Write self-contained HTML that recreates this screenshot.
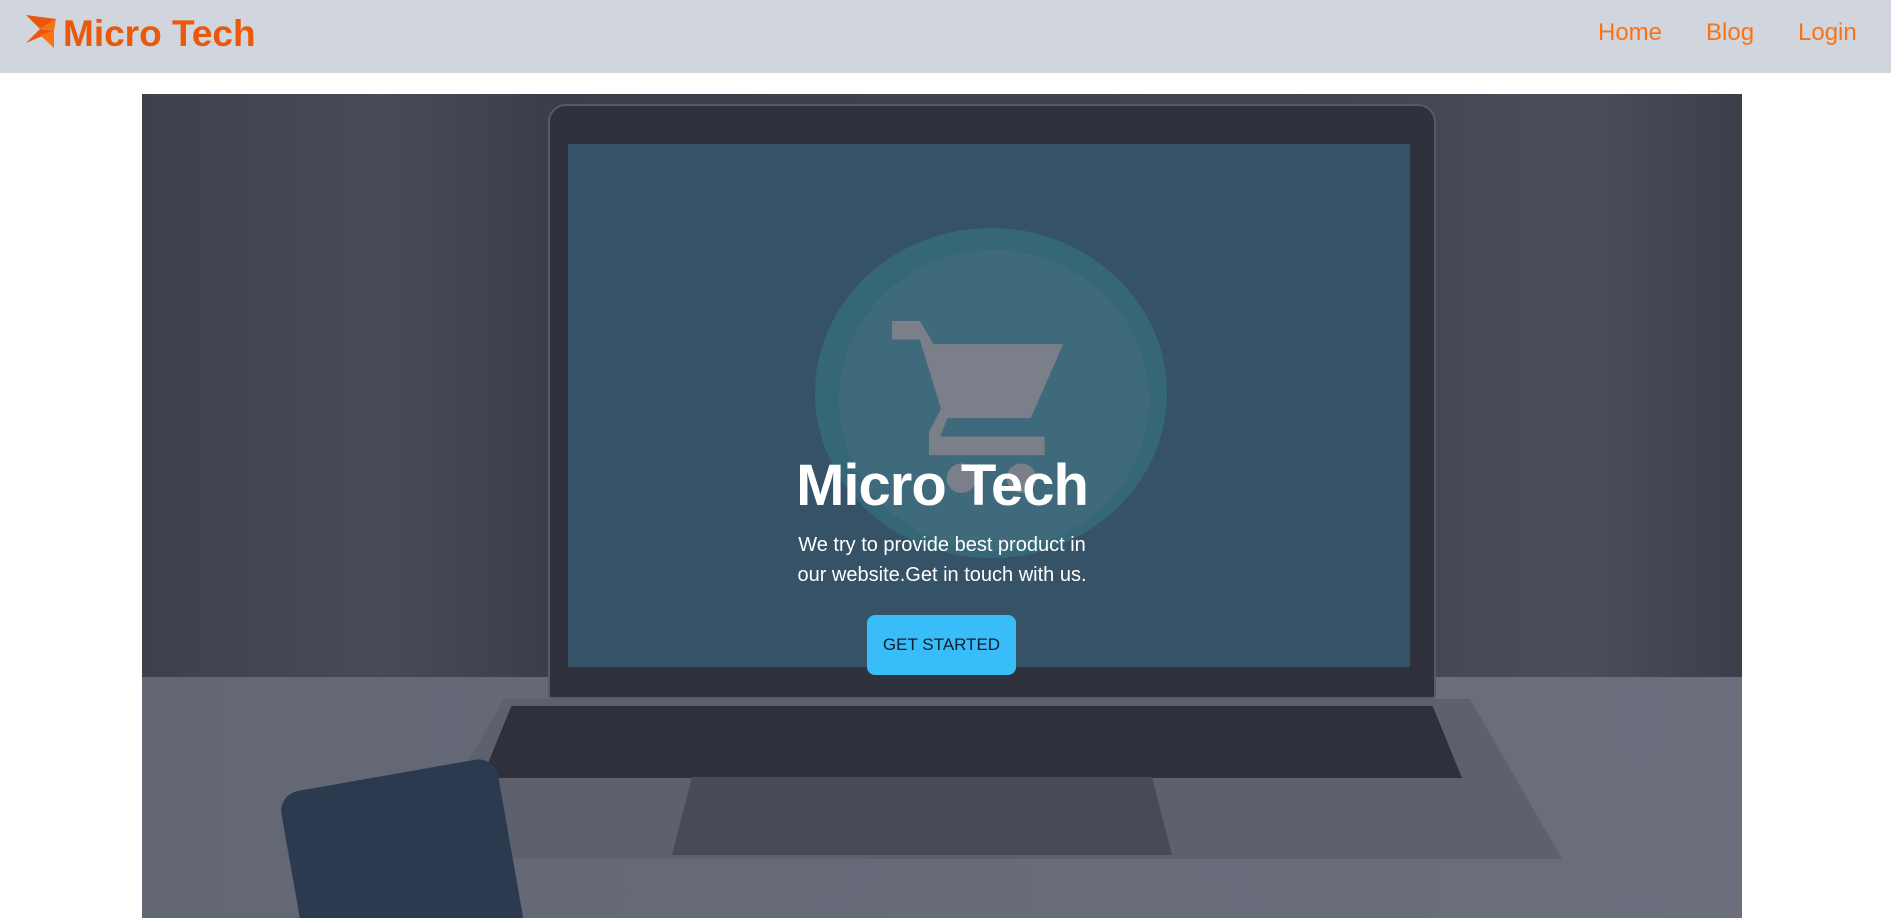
<!DOCTYPE html>
<html><head><meta charset="utf-8"><style>
*{margin:0;padding:0;box-sizing:border-box}
html,body{width:1891px;height:918px;overflow:hidden}
body{background:#fff;font-family:"Segoe UI","Liberation Sans",sans-serif;position:relative}
nav{position:absolute;left:0;top:0;width:1891px;height:73px;background:#d1d5de}
.logo{position:absolute;left:63px;top:13px;font-size:37px;font-weight:bold;color:#ea580c}
.links a{position:absolute;top:19px;font-size:24px;color:#f97316;text-decoration:none}
.hero{position:absolute;left:142px;top:94px;width:1600px;height:824px;overflow:hidden;background:linear-gradient(90deg,#3d414c 0%,#474b58 15%,#3b3f4b 25%,#41454f 75%,#4a4e5b 90%,#3b3f4a 100%)}
.a{position:absolute}
</style></head><body>
<nav>
<svg class="a" style="left:26px;top:15px" width="32" height="34" viewBox="0 0 32 34"><polygon points="0,0 30,4 14,14" fill="#ea580c"/><polygon points="30,4 28,16 14,14" fill="#f97316"/><polygon points="14,14 28,16 0,28" fill="#ea580c"/><polygon points="14,20 28,16 28,33" fill="#f97316"/></svg>
<div class="logo">Micro Tech</div>
<div class="links"><a style="left:1598px">Home</a><a style="left:1706px">Blog</a><a style="left:1798px">Login</a></div>
</nav>
<div class="hero">
<div class="a" style="left:0;top:583px;width:1600px;height:241px;background:linear-gradient(90deg,#636774,#6b6f7c)"></div>
<div class="a" style="left:406px;top:10px;width:888px;height:595px;background:#2f323d;border-radius:18px 18px 4px 4px;border:2px solid #55596a"></div>
<div class="a" style="left:426px;top:50px;width:842px;height:523px;background:#365267"></div>
<div class="a" style="left:673px;top:134px;width:352px;height:330px;border-radius:50%;background:#356777"></div>
<div class="a" style="left:697px;top:156px;width:310px;height:300px;border-radius:50%;background:#3f6a7c"></div>
<svg class="a" style="left:750px;top:227px" width="185" height="185" viewBox="0 0 200 200"><path d="M0 0 H30 L45 25 H185 L150 105 H60 L52 125 H165 V145 H40 V120 L53 95 L30 20 H0Z" fill="#7b7f89"/><circle cx="75" cy="170" r="16" fill="#7b7f89"/><circle cx="140" cy="170" r="16" fill="#7b7f89"/></svg>
<div class="a" style="left:270px;top:605px;width:1150px;height:200px;background:#5d616e;clip-path:polygon(8% 0,92% 0,100% 80%,0 80%)"></div>
<div class="a" style="left:340px;top:612px;width:980px;height:72px;background:#2e313b;clip-path:polygon(3% 0,97% 0,100% 100%,0 100%)"></div>
<div class="a" style="left:530px;top:683px;width:500px;height:78px;background:#474b58;clip-path:polygon(4% 0,96% 0,100% 100%,0 100%)"></div>
<div class="a" style="left:150px;top:680px;width:220px;height:180px;background:#2c3a4f;border-radius:20px;transform:rotate(-10deg)"></div>
<div class="a" style="left:0;top:358px;width:1600px;text-align:center;color:#fff;font-weight:bold;font-size:58px;letter-spacing:-1px">Micro Tech</div>
<div class="a" style="left:0;top:436px;width:1600px;text-align:center;color:#fff;font-size:20px;line-height:30px">We try to provide best product in<br>our website.Get in touch with us.</div>
<div class="a" style="left:725px;top:521px;width:149px;height:60px;background:#38bdf8;border-radius:8px;color:#0f1e2e;font-size:17px;text-align:center;line-height:60px">GET STARTED</div>
</div>
</body></html>
